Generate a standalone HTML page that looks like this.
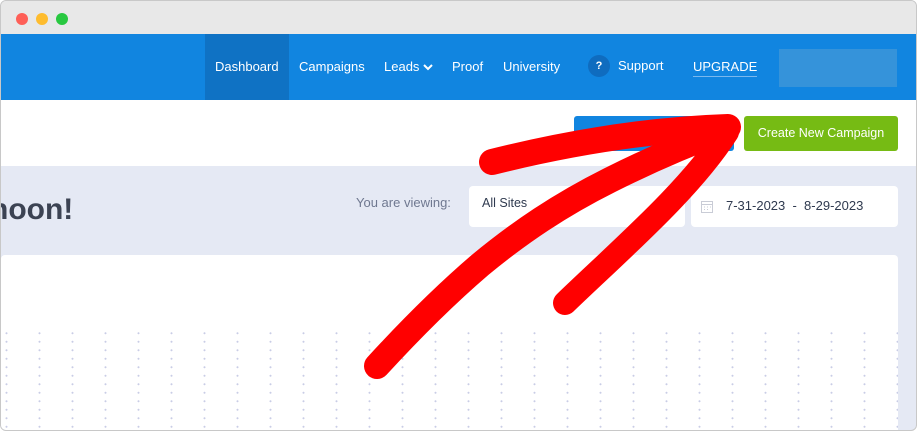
<!DOCTYPE html>
<html><head><style>
*{margin:0;padding:0;box-sizing:border-box}
body{width:917px;height:431px;overflow:hidden;background:#fff;font-family:"Liberation Sans",sans-serif;position:relative}
.frame{position:absolute;left:0;top:0;width:917px;height:431px;border:1px solid #c8c8c8;border-radius:6px;overflow:hidden;background:#e5e9f4}
.title{position:absolute;left:0;top:0;width:100%;height:33px;background:#e8e8e8}
.dot{position:absolute;top:12px;width:12px;height:12px;border-radius:50%}
.nav{position:absolute;left:0;top:33px;width:100%;height:66px;background:#1185e0;color:#fff;font-size:13px}
.nav span{position:absolute;top:25px}
.bar{position:absolute;left:0;top:99px;width:100%;height:66px;background:#fff}
.btn{position:absolute;top:115px;height:35px;border-radius:3px;color:#fff;font-size:12.5px;line-height:35px;text-align:center}
.box{position:absolute;background:#fff;border-radius:4px;top:185px;height:41px}
.card{position:absolute;left:0;top:254px;width:897px;height:190px;background:#fff;border-radius:4px}
.dots{position:absolute;left:0;top:328px;width:897px;height:110px;
background-image:radial-gradient(circle,#c9cde6 0.8px,transparent 1.2px);background-size:33px 8.5px;background-position:-11px 0}
</style></head><body>
<div class="frame">
<div class="title">
<div class="dot" style="left:15px;background:#fe5f57"></div>
<div class="dot" style="left:35px;background:#febc2e"></div>
<div class="dot" style="left:55px;background:#28c840"></div>
</div>
<div class="nav">
<div style="position:absolute;left:204px;top:0;width:84px;height:66px;background:#0f72c4"></div>
<span style="left:214px">Dashboard</span>
<span style="left:298px">Campaigns</span>
<span style="left:383px">Leads <svg width="10" height="8" viewBox="0 0 10 8"><path d="M1 2l4 4 4-4" stroke="#fff" stroke-width="2" fill="none"/></svg></span>
<span style="left:451px">Proof</span>
<span style="left:502px">University</span>
<div style="position:absolute;left:587px;top:21px;width:22px;height:22px;border-radius:50%;background:#0f6cbf;font-size:11px;font-weight:bold;text-align:center;line-height:22px">?</div>
<span style="left:617px;top:24px">Support</span>
<span style="left:692px;border-bottom:1px solid #7ab8ee;padding-bottom:2px">UPGRADE</span>
<div style="position:absolute;left:778px;top:15px;width:118px;height:38px;background:#3a95d9;opacity:.9"></div>
</div>
<div class="bar"></div>
<div class="btn" style="left:573px;width:160px;background:#1185e0;text-align:left;padding-left:16px">Campaigns</div>
<div class="btn" style="left:743px;width:154px;background:#76bb14">Create New Campaign</div>
<div style="position:absolute;left:-11px;top:192px;font-size:30px;font-weight:bold;color:#3c4353">hoon!</div>
<div style="position:absolute;left:355px;top:194px;font-size:13px;color:#6f7890">You are viewing:</div>
<div class="box" style="left:468px;width:216px"><span style="position:absolute;left:13px;top:10px;font-size:12.5px;color:#2f3a4f">All Sites</span></div>
<div class="box" style="left:690px;width:207px">
<svg style="position:absolute;left:10px;top:14px" width="12" height="13" viewBox="0 0 12 13"><rect x="0.5" y="1.5" width="11" height="11" fill="none" stroke="#c9ccd6"/><path d="M1 4.5h10M3 7h1M6 7h1M9 7h1M3 9.5h1M6 9.5h1" stroke="#c9ccd6"/></svg>
<span style="position:absolute;left:35px;top:12px;font-size:13px;color:#2f3a4f">7-31-2023 &nbsp;- &nbsp;8-29-2023</span></div>
<div class="card"></div>
<div class="dots"></div>
</div>
<svg style="position:absolute;left:0;top:0" width="917" height="431" viewBox="0 0 917 431">
<g stroke="#ff0000" stroke-linecap="round" stroke-linejoin="round" fill="none">
<path d="M377 366 C410 330 445 295 480 265 C520 232 560 205 610 180 C650 160 690 143 725 130" stroke-width="26"/>
<path d="M492 162 C560 145 640 130 728 127" stroke-width="26"/>
<path d="M727 132 C690 190 620 250 565 303" stroke-width="24"/>
</g>
</svg>
</body></html>
